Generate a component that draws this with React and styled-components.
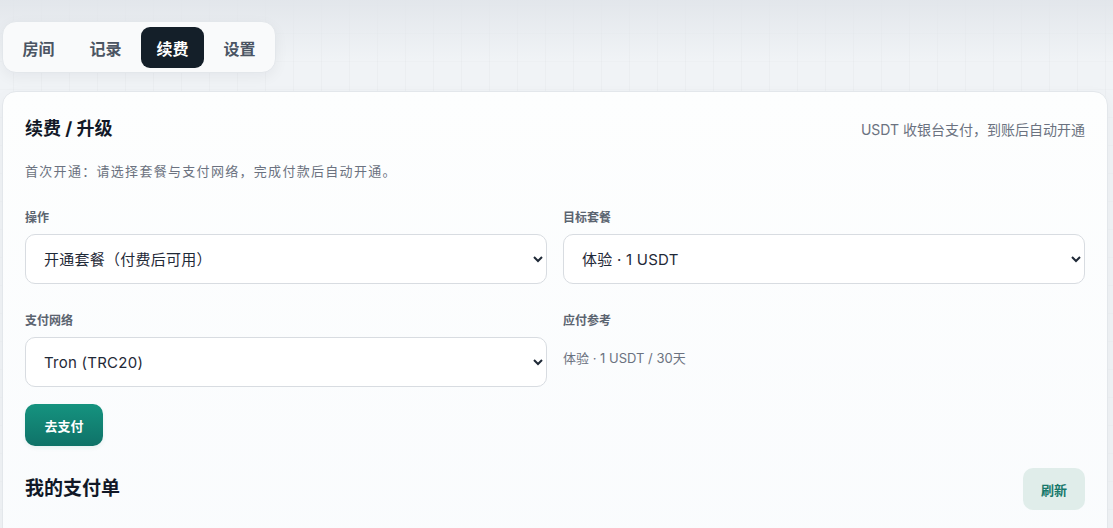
import styled, { createGlobalStyle } from "styled-components";

const GlobalStyle = createGlobalStyle`
  html, body {
    margin: 0;
    padding: 0;
  }
  body {
    font-family: Inter, "Noto Sans CJK SC", sans-serif;
    color: #111827;
    background-color: #f0f3f6;
    background-image:
      linear-gradient(180deg, rgba(225, 229, 234, 0.9) 0%, rgba(240, 243, 246, 0) 60px),
      linear-gradient(90deg, rgba(0, 0, 0, 0.018) 1px, transparent 1px),
      linear-gradient(0deg, rgba(0, 0, 0, 0.012) 1px, transparent 1px);
    background-size: 100% 100%, 28px 28px, 28px 28px;
    background-position: 0 0, 13px 0, 0 6px;
    min-height: 100vh;
  }
`;

const Page = styled.div`
  padding: 21px 5px 0 2px;
  display: flex;
  flex-direction: column;
  gap: 18px;
`;

const TabBar = styled.nav`
  align-self: flex-start;
  display: flex;
  gap: 4px;
  padding: 5px 4px 4px;
  background: #f9fafb;
  border: 1px solid #e3e7eb;
  border-radius: 14px;
  box-shadow: 0 4px 14px rgba(15, 23, 42, 0.05);
`;

const Tab = styled.button`
  border: none;
  font-family: inherit;
  font-size: 16px;
  font-weight: 700;
  height: 41px;
  padding: 0 15.5px;
  border-radius: 9px;
  cursor: pointer;
  background: ${(p) => (p.active ? "#141f29" : "transparent")};
  color: ${(p) => (p.active ? "#ffffff" : "#4b5563")};
`;

const Card = styled.section`
  background: linear-gradient(180deg, #fdfefe 0%, #f9fbfd 100%);
  border: 1px solid #e3e7eb;
  border-radius: 14px;
  padding: 22px 22px 40px;
  box-shadow: 0 6px 18px rgba(15, 23, 42, 0.04);
  min-height: 460px;
`;

const Head = styled.div`
  display: flex;
  justify-content: space-between;
  align-items: center;
`;

const Title = styled.h2`
  margin: 0;
  font-size: ${(p) => p.size || 18}px;
  font-weight: 700;
  color: #111827;
  line-height: 30px;
`;

const Note = styled.span`
  font-size: 14px;
  color: #6b7280;
`;

const Sub = styled.p`
  margin: 17px 0 29px;
  font-size: 13px;
  letter-spacing: 1.3px;
  color: #6b7280;
`;

const Grid = styled.div`
  display: grid;
  grid-template-columns: 1fr 1fr;
  column-gap: 16px;
  row-gap: 28px;
`;

const Field = styled.div`
  display: flex;
  flex-direction: column;
`;

const Label = styled.label`
  font-size: 12px;
  font-weight: 700;
  color: #5b6470;
  line-height: 17px;
  margin-bottom: 8px;
`;

const Select = styled.select`
  height: 50px;
  border: 1px solid #d8dce1;
  border-radius: 10px;
  background: #ffffff;
  padding: 0 12px 0 14px;
  font-family: inherit;
  font-size: 15px;
  letter-spacing: 0.25px;
  color: #1f2937;
`;

const Value = styled.div`
  font-size: 13px;
  color: #6b7280;
  padding-top: 11px;
`;

const PayButton = styled.button`
  display: block;
  margin-top: 17px;
  height: 42px;
  padding: 0 19.5px;
  border: none;
  border-radius: 10px;
  background: linear-gradient(180deg, #15937f 0%, #0f7268 100%);
  color: #ffffff;
  font-family: inherit;
  font-size: 13px;
  font-weight: 700;
  box-shadow: 0 2px 4px rgba(15, 114, 104, 0.08);
`;

const OrdersHead = styled(Head)`
  margin-top: 22px;
`;

const GhostButton = styled.button`
  height: 42px;
  padding: 0 18px;
  border: none;
  border-radius: 10px;
  background: #e0edea;
  color: #17786b;
  font-family: inherit;
  font-size: 13px;
  font-weight: 700;
`;

const tabs = ["房间", "记录", "续费", "设置"];

export default function App() {
  return (
    <>
      <GlobalStyle />
      <Page>
        <TabBar>
          {tabs.map((t) => (
            <Tab key={t} active={t === "续费"}>
              {t}
            </Tab>
          ))}
        </TabBar>
        <Card>
          <Head>
            <Title>续费 / 升级</Title>
            <Note>USDT 收银台支付，到账后自动开通</Note>
          </Head>
          <Sub>首次开通：请选择套餐与支付网络，完成付款后自动开通。</Sub>
          <Grid>
            <Field>
              <Label>操作</Label>
              <Select defaultValue="open">
                <option value="open">开通套餐（付费后可用）</option>
              </Select>
            </Field>
            <Field>
              <Label>目标套餐</Label>
              <Select defaultValue="trial">
                <option value="trial">体验 · 1 USDT</option>
              </Select>
            </Field>
            <Field>
              <Label>支付网络</Label>
              <Select defaultValue="trc20">
                <option value="trc20">Tron (TRC20)</option>
              </Select>
            </Field>
            <Field>
              <Label>应付参考</Label>
              <Value>体验 · 1 USDT / 30天</Value>
            </Field>
          </Grid>
          <PayButton>去支付</PayButton>
          <OrdersHead>
            <Title size={19}>我的支付单</Title>
            <GhostButton>刷新</GhostButton>
          </OrdersHead>
        </Card>
      </Page>
    </>
  );
}
